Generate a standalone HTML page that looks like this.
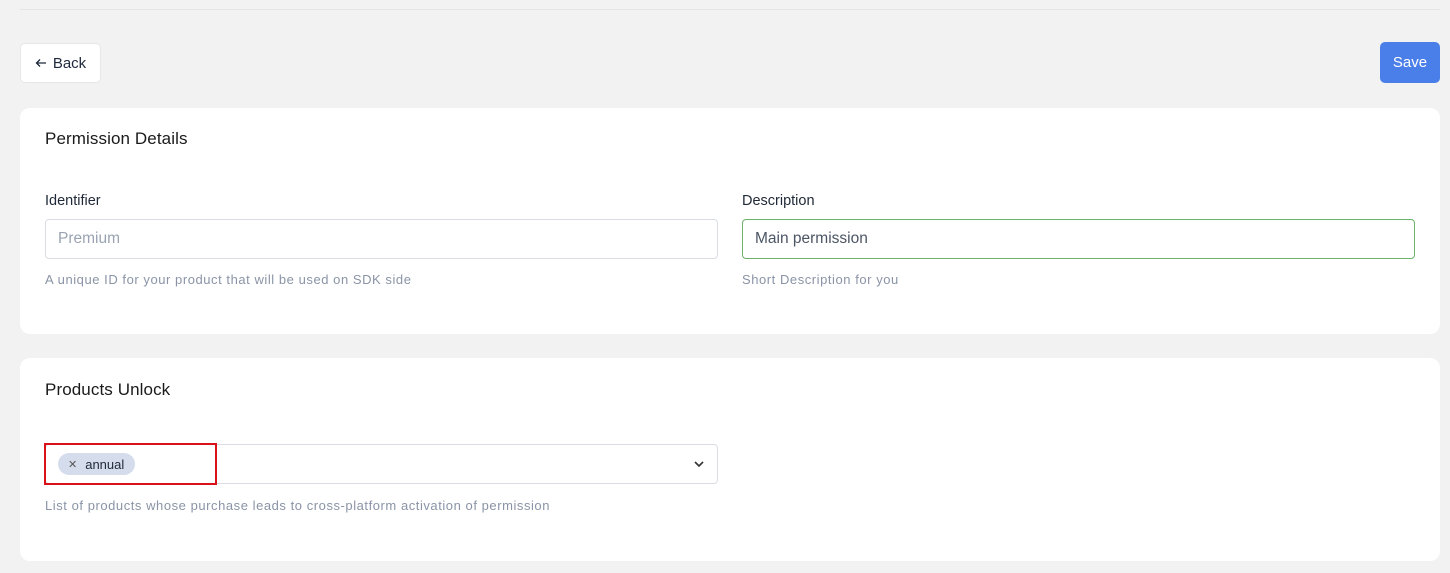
<!DOCTYPE html>
<html><head><style>
*{box-sizing:border-box;margin:0;padding:0}
body{width:1450px;height:573px;background:#f2f2f2;font-family:"Liberation Sans",sans-serif;position:relative;overflow:hidden;color:#1f2937}
.abs{position:absolute}
.line{left:20px;right:10px;top:9px;height:1px;background:#e5e5e5}
.back{left:20px;top:43px;width:81px;height:40px;background:#fff;border:1px solid #e5e7eb;border-radius:5px;font-size:15px;color:#1e293b;display:flex;align-items:center;justify-content:center;gap:6px;line-height:1}
.save{left:1380px;top:42px;width:60px;height:41px;background:#4a7ee8;border-radius:5px;color:#fff;font-size:15px;display:flex;align-items:center;justify-content:center;line-height:1}
.card{left:20px;width:1420px;background:#fff;border-radius:10px}
.title{font-size:17px;color:#1a1a1a;font-weight:500;letter-spacing:0.1px}
.lbl{font-size:14.5px;color:#1f2937}
.inp{height:40px;border:1px solid #d9dde3;border-radius:4px;font-size:15.5px;padding-left:12px;display:flex;align-items:center}
.help{font-size:13px;color:#8a94a6;letter-spacing:0.55px}
</style></head><body>
<div class="abs line"></div>
<div class="abs back"><svg width="12" height="10" viewBox="0 0 12 10"><path d="M11 5H1.5M5 1.5L1.5 5 5 8.5" fill="none" stroke="#1e293b" stroke-width="1.3"/></svg>Back</div>
<div class="abs save">Save</div>
<div class="abs card" style="top:108px;height:226px"></div>
<div class="abs title" style="left:45px;top:129px">Permission Details</div>
<div class="abs lbl" style="left:45px;top:193px">Identifier</div>
<div class="abs lbl" style="left:742px;top:193px">Description</div>
<div class="abs inp" style="left:45px;top:219px;width:673px;color:#9aa3b2">Premium</div>
<div class="abs inp" style="left:742px;top:219px;width:673px;color:#4b5563;border-color:#6bb36b">Main permission</div>
<div class="abs help" style="left:45px;top:272px">A unique ID for your product that will be used on SDK side</div>
<div class="abs help" style="left:742px;top:272px">Short Description for you</div>
<div class="abs card" style="top:358px;height:203px"></div>
<div class="abs title" style="left:45px;top:380px">Products Unlock</div>
<div class="abs inp" style="left:45px;top:444px;width:673px"></div>
<svg class="abs" style="left:693px;top:459px" width="12" height="10" viewBox="0 0 12 10"><path d="M2 3l4 4 4-4" fill="none" stroke="#333" stroke-width="1.6"/></svg>
<div class="abs" style="left:44px;top:443px;width:173px;height:42px;border:2px solid #d9121a"></div>
<div class="abs" style="left:58px;top:453px;width:77px;height:22px;background:#d5ddec;border-radius:11px;font-size:13px;color:#1f2937;display:flex;align-items:center;padding-left:10px;gap:8px"><span style="font-size:11px;color:#555">&#10005;</span>annual</div>
<div class="abs help" style="left:45px;top:498px">List of products whose purchase leads to cross-platform activation of permission</div>
</body></html>
